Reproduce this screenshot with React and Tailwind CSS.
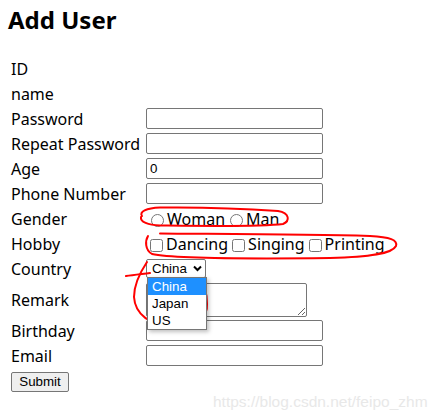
import React from 'react';

const font = { fontFamily: '"Noto Sans", "Open Sans", sans-serif' };

const textRows = [
  { label: 'Password', type: 'password' },
  { label: 'Repeat Password', type: 'password' },
  { label: 'Age', type: 'number', value: '0' },
  { label: 'Phone Number', type: 'text' },
];

function Row({ label, children, className = 'h-[25px]' }) {
  return (
    <div className={`flex items-center ${className}`}>
      <div className="w-[135px] shrink-0 text-[16px] leading-[20px] text-black">{label}</div>
      <div className="flex items-center">{children}</div>
    </div>
  );
}

function TextBox({ type = 'text', value = '' }) {
  return (
    <input
      type={type === 'number' ? 'text' : type}
      defaultValue={value}
      className="w-[177px] h-[21px] border border-[#767676] rounded-[2px] px-[3px] text-[13.33px] font-['Liberation_Sans',Arial,sans-serif] bg-white outline-none"
    />
  );
}

function Annotations() {
  return (
    <svg className="absolute inset-0 pointer-events-none" width="441" height="419" viewBox="0 0 441 419" fill="none">
      <g stroke="#ff0000" strokeWidth="2" strokeLinecap="round" strokeLinejoin="round">
        {/* Gender */}
        <path d="M142 216 C139 212, 146 208, 160 207.5 C200 207, 250 209, 278 211 C290 213, 290 221, 283 224 C260 227, 200 226, 160 225.5 C148 225, 140 222, 141 217" />
        {/* Hobby */}
        <path d="M148 236 C145 241, 145 250, 152 254 C170 258, 240 259, 330 258 C370 257, 392 254, 396 246 C398 240, 390 237, 370 236 C300 234, 200 234, 160 233.5" />
        {/* Country */}
        <path d="M126 276 C133 275, 142 274, 150 273" />
        <path d="M147 262 C141 271, 134 284, 134 297 C135 314, 150 326, 173 326 C196 327, 208 318, 207 304 C207 292, 205 285, 199 280" />
      </g>
    </svg>
  );
}

export default function App() {
  return (
    <div className="relative w-[441px] h-[419px] bg-white overflow-hidden" style={font}>
      <div className="pl-[8px] pt-[4px]">
        <h1 className="text-[24px] leading-[32px] font-bold text-black">Add User</h1>
      </div>

      <div className="pl-[11px] mt-[20px]">
        <Row label="ID" />
        <Row label="name" />
        {textRows.map((r) => (
          <Row key={r.label} label={r.label}>
            <TextBox type={r.type} value={r.value} />
          </Row>
        ))}
        <Row label="Gender">
          <label className="flex items-center">
            <input type="radio" name="gender" className="ml-[5px] mr-[3px] mt-[3px] w-[13px] h-[13px]" />
            <span className="text-[16px] leading-[20px]">Woman</span>
          </label>
          <label className="flex items-center">
            <input type="radio" name="gender" className="ml-[5px] mr-[3px] mt-[3px] w-[13px] h-[13px]" />
            <span className="text-[16px] leading-[20px]">Man</span>
          </label>
        </Row>
        <Row label="Hobby">
          {['Dancing', 'Singing', 'Printing'].map((h) => (
            <label key={h} className="flex items-center">
              <input type="checkbox" className="ml-[4px] mr-[3px] mt-[3px] w-[13px] h-[13px]" />
              <span className="text-[16px] leading-[20px]">{h}</span>
            </label>
          ))}
        </Row>
        <Row label="Country">
          <div className="relative">
            <div className="w-[60px] h-[19px] border border-[#767676] rounded-[2px] bg-white flex items-center justify-between pl-[5px] pr-[3px] text-[13.33px] font-['Liberation_Sans',Arial,sans-serif]">
              <span>China</span>
              <svg width="9" height="7" viewBox="0 0 9 7">
                <path d="M1 1.5 L4.5 5 L8 1.5" stroke="#000" strokeWidth="2" fill="none" />
              </svg>
            </div>
            <ul className="absolute left-[1px] top-[18px] w-[60px] bg-white border border-[#767676] shadow-[2px_2px_4px_rgba(0,0,0,0.25)] z-10 text-[13.33px] leading-[17px] font-['Liberation_Sans',Arial,sans-serif]">
              <li className="bg-[#1e90ff] text-white px-[4px]">China</li>
              <li className="px-[4px]">Japan</li>
              <li className="px-[4px]">US</li>
            </ul>
          </div>
        </Row>
        <Row label="Remark" className="h-[37px]">
          <textarea className="w-[161px] h-[34px] border border-[#767676] rounded-[2px] bg-white outline-none" />
        </Row>
        <Row label="Birthday">
          <TextBox />
        </Row>
        <Row label="Email">
          <TextBox />
        </Row>
        <button className="mt-[2px] w-[58px] h-[20px] border border-[#767676] rounded-[2px] bg-[#efefef] text-[13.33px] leading-[16px] font-['Liberation_Sans',Arial,sans-serif] text-black">
          Submit
        </button>
      </div>

      <div className="absolute left-[213px] top-[393px] text-[15.5px] leading-[18px] text-[#e8e8e8] font-['Liberation_Sans',Arial,sans-serif]">
        https://blog.csdn.net/feipo_zhm
      </div>

      <Annotations />
    </div>
  );
}
